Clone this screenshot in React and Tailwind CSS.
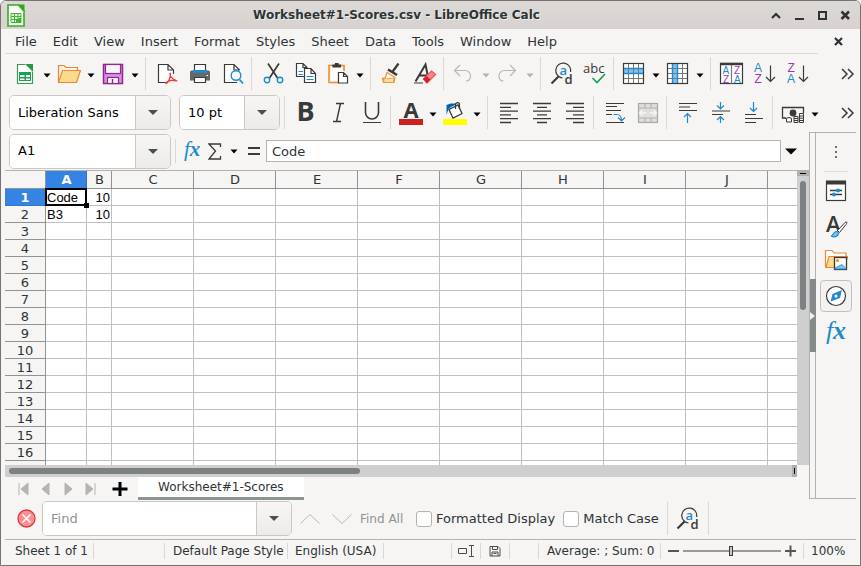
import React from "react";

const BLUE = "#1e8bcd";
const INK = "#3a3a38";

function Icon({ children, w = 24, h = 24 }) {
  return (
    <svg width={w} height={h} viewBox={`0 0 ${w} ${h}`} fill="none" stroke={INK} strokeWidth="1.2" aria-hidden="true" className="shrink-0 overflow-visible">
      {children}
    </svg>
  );
}

function Arrow({ dim }) {
  return (
    <svg width="8" height="5" viewBox="0 0 8 5" aria-hidden="true">
      <path d="M0.5 0.5h7L4 4.5z" fill={dim ? "#b4b2b0" : "#000"} />
    </svg>
  );
}

function Tool({ label, children }) {
  return (
    <button type="button" aria-label={label} className="flex h-8 w-[33px] shrink-0 items-center justify-center">
      {children}
    </button>
  );
}

function Split({ label, dim, children }) {
  return (
    <div className="flex shrink-0">
      <button type="button" aria-label={label} className="flex h-8 w-8 items-center justify-center">
        {children}
      </button>
      <button type="button" aria-label={`${label} options`} className="flex h-8 w-3 items-center justify-center pt-1">
        <Arrow dim={dim} />
      </button>
    </div>
  );
}

function Sep({ wide }) {
  return <div className={`${wide ? "ml-1" : "ml-0.5"} mr-1 h-[33px] w-px shrink-0 bg-[#dad8d6]`} />;
}

function Combo({ label, value, placeholder, className, buttonClass }) {
  return (
    <div className={`flex h-[35px] shrink-0 overflow-hidden rounded-[5px] border border-[#cdc7c2] bg-white ${className}`}>
      <input aria-label={label} defaultValue={value} placeholder={placeholder} className="min-w-0 flex-1 bg-white px-2 text-[13px] text-black outline-none placeholder:text-[#8f9192]" />
      <button type="button" aria-label={`${label} list`} className={`flex items-center justify-center border-l border-[#cdc7c2] bg-linear-to-b from-[#f7f6f5] to-[#edebe9] ${buttonClass}`}>
        <svg width="10" height="5" viewBox="0 0 10 5" aria-hidden="true"><path d="M0 0h10L5 5z" fill="#4a4f50" /></svg>
      </button>
    </div>
  );
}

function Letter({ x, y, size, color, weight = 400, children }) {
  return (
    <text x={x} y={y} fontSize={size} fontWeight={weight} fontFamily="Liberation Sans, sans-serif" fill={color} stroke="none">
      {children}
    </text>
  );
}

const FindIcon = () => (
  <Icon>
    <path d="M12.5 16A7.500 7.500 0 1 1 20.600 10" />
    <path d="M8.500 14.500L1.500 21.500" strokeWidth="2.200" />
    <text x="9.500" y="13" fontSize="13" fontFamily="Open Sans, sans-serif" fill={BLUE} stroke="none" fontWeight="600">a</text>
    <text x="14.500" y="22" fontSize="13" fontFamily="Open Sans, sans-serif" fill={INK} stroke="none" fontWeight="600">d</text>
  </Icon>
);

const Chevrons = () => (
  <Icon w={14} h={14}>
    <path d="M2 2l5 5-5 5M8 2l5 5-5 5" strokeWidth="1.5" />
  </Icon>
);

function AlignIcon({ lines }) {
  return (
    <Icon>
      {lines.map(([x1, x2], i) => (
        <path key={i} d={`M${x1} ${2.5 + i * 3.8}H${x2}`} strokeWidth="1.3" />
      ))}
    </Icon>
  );
}

function Grid({ col }) {
  return (
    <Icon>
      <rect x="1.5" y="1.5" width="20" height="20" fill="#fff" stroke="none" />
      {col ? <rect x="6.5" y="1.5" width="5" height="20" fill="#83beec" stroke="none" /> : <rect x="1.5" y="6.5" width="20" height="5" fill="#83beec" stroke="none" />}
      <path d="M6.5 2v19M11.5 2v19M16.5 2v19M2 6.5h19M2 11.5h19M2 16.5h19" stroke="#797774" strokeWidth="1" />
      {col ? <path d="M6.5 2v19M11.5 2v19" stroke={BLUE} strokeWidth="1.4" /> : <path d="M2 6.5h19M2 11.5h19" stroke={BLUE} strokeWidth="1.4" />}
      <rect x="1.5" y="1.5" width="20" height="20" />
    </Icon>
  );
}

function TitleBar() {
  const controls = [
    ["Roll up", <path key="p" d="M2 9l4-4 4 4" strokeWidth="2.2" />],
    ["Minimize", <path key="p" d="M2 10h9" strokeWidth="2" />],
    ["Maximize", <rect key="p" x="3" y="3" width="7" height="7" strokeWidth="2" />],
    ["Close", <path key="p" d="M2.5 2.5l7.500 7.500M10 2.500L2.500 10" strokeWidth="2.6" />],
  ];
  return (
    <header className="flex h-7 shrink-0 items-center bg-linear-to-b from-[#dcd9d6] to-[#d7d2cf] pr-[3px] pl-1.5">
      <svg width="18" height="23" viewBox="0 0 18 23" aria-hidden="true">
        <path d="M1 1h11l5 6v15H1z" fill="#fff" stroke="#2fb01c" strokeWidth="1.6" />
        <path d="M10 .5h7.5V9z" fill="#2fa81c" />
        <path d="M10 .5l7.5 8.500" stroke="#8fdc7e" />
        <path d="M4 9.500h10v9H4zM4 12.500h10M4 15.500h10M7.500 9.500v9M11 9.500v9" fill="#e4f7df" stroke="#43b332" />
        <path d="M9 18v-3h2v-1h3v4z" fill="#43b332" />
      </svg>
      <h1 className="flex-1 pl-[3px] text-center text-[12px] font-bold text-[#2e3436] [text-shadow:1px_1px_0_#f0eeec]">Worksheet#1-Scores.csv - LibreOffice Calc</h1>
      <div className="flex">
        {controls.map(([name, shape]) => (
          <button key={name} type="button" aria-label={name} className="flex h-6 w-[23px] items-center justify-center">
            <svg width="13" height="13" viewBox="0 0 13 13" fill="none" stroke="#2e3436">{shape}</svg>
          </button>
        ))}
      </div>
    </header>
  );
}

const MENUS = ["File", "Edit", "View", "Insert", "Format", "Styles", "Sheet", "Data", "Tools", "Window", "Help"];

function MenuBar() {
  return (
    <div className="flex h-[25px] shrink-0 px-1">
      <nav className="mr-3 flex flex-1 border-b border-[#dad8d6] pl-0.5">
        {MENUS.map((m) => (
          <button key={m} type="button" className="px-2 pt-px text-[13px] text-[#2e3436]">{m}</button>
        ))}
      </nav>
      <button type="button" aria-label="Close document" className="mr-2.5 flex w-4 items-center justify-center">
        <svg width="9" height="9" viewBox="0 0 9 9" fill="none" stroke="#2e3436" strokeWidth="2.200"><path d="M1 1l7 7M8 1L1 8" /></svg>
      </button>
    </div>
  );
}

function StandardBar() {
  return (
    <div className="flex h-[39px] shrink-0 items-center pl-2 pr-1.5">
      <Split label="New">
        <Icon>
          <path d="M4.500 2.500H13l6.500 6v13h-15z" fill="#fff" stroke="#3a9a52" />
          <path d="M12 2h8v8z" fill="#2d9447" stroke="none" />
          <path d="M12 2l8 8" stroke="#8fd6a0" strokeWidth="1" />
          <path d="M6 10h12v9H6z" fill="#18a150" stroke="none" />
          <path d="M7 13h4.500v2H7zM13 13h4v2h-4zM7 16.500h4.500v1.500H7zM13 16.500h4V18h-4z" fill="#fff" stroke="none" />
        </Icon>
      </Split>
      <Split label="Open">
        <Icon>
          <path d="M1.500 20.500v-17H7l2 2h11.500v3" stroke="#ed8733" fill="#fbf3e8" />
          <path d="M1.500 20.500l4-12h18l-4 12z" fill="#fadb8e" stroke="#ed8733" />
        </Icon>
      </Split>
      <Split label="Save">
        <Icon>
          <rect x="2.500" y="2.500" width="19" height="19" fill="#d592e2" stroke="#92278f" strokeWidth="1.500" />
          <rect x="4.500" y="2.500" width="15" height="9" fill="#f6f5f4" stroke="#92278f" />
          <rect x="6.500" y="15.500" width="11" height="6" fill="#fff" stroke="#92278f" />
          <path d="M11.500 17v4" stroke="#92278f" strokeWidth="1.500" />
        </Icon>
      </Split>
      <Sep wide />
      <Tool label="Export as PDF">
        <Icon>
          <path d="M18.500 12V8L13 2.500H3.500v18H11M13 2.500V8h5.500" fill="#fff" />
          <path d="M15.500 11.500c-1.500 0 0 5 5.500 7 2.500 1-2-.8-5.500 0-3 .7-5 2.500-4.500 3 1.500 0 5-6 4.500-10z" stroke="#ed3d3b" strokeWidth="1.300" />
        </Icon>
      </Tool>
      <Tool label="Print">
        <Icon>
          <path d="M3.500 8.500h17a1.500 1.500 0 0 1 1.500 1.500v8.500H2V10a1.500 1.500 0 0 1 1.500-1.500z" fill="#696764" stroke="none" />
          <path d="M6.500 10V2.500h11V10" fill="#fff" />
          <path d="M5 8h14v3H5z" fill="#1e8bcd" stroke="none" />
          <path d="M6.500 15.500h11v5h-11z" fill="#fff" />
          <path d="M18.500 13.500h1.500" stroke="#fff" />
        </Icon>
      </Tool>
      <Tool label="Print preview">
        <Icon>
          <path d="M18.500 8.500V8L13 2.500H3.500v18H16M13 2.500V8h5.500" fill="#fff" />
          <circle cx="15" cy="13.500" r="4.800" fill="#f6fafd" stroke={BLUE} strokeWidth="1.400" />
          <path d="M18.500 17.500l3.500 4" stroke={BLUE} strokeWidth="1.700" />
        </Icon>
      </Tool>
      <Sep />
      <Tool label="Cut">
        <Icon>
          <path d="M7 1.500L16.500 16M18 1.500L8.500 16" strokeWidth="1.700" />
          <circle cx="6" cy="18" r="2.700" stroke={BLUE} strokeWidth="1.400" />
          <circle cx="19" cy="18" r="2.700" stroke={BLUE} strokeWidth="1.400" />
        </Icon>
      </Tool>
      <Tool label="Copy">
        <Icon>
          <path d="M10 14.500H2.500v-13H9l4 4V7M9 1.500v4h4" fill="#fff" />
          <path d="M10.500 6.500H17l4.500 5v9h-11zM17 6.500v5h4.500" fill="#fff" />
          <path d="M4.500 9.500H9M4.500 12.500H9M12.500 14.500h7M12.500 17.500h7" stroke={BLUE} />
        </Icon>
      </Tool>
      <Split label="Paste">
        <Icon>
          <path d="M12 20.500H3v-17h15V9" fill="#fdf3e3" stroke="#ed8f33" strokeWidth="1.600" />
          <path d="M5 4.500h11V10h-5v9H5z" fill="#fff" stroke="none" />
          <path d="M7 5v-2h2.500V1.500h2.500v1.500H14.500v2z" fill={INK} stroke={INK} />
          <path d="M12.500 10.500h5l4 4v6.500h-9zM17.500 10.500v4h4" fill="#fff" />
        </Icon>
      </Split>
      <Sep wide />
      <Tool label="Clone formatting">
        <Icon>
          <path d="M18.500 1.500l-6.500 9" strokeWidth="2.200" />
          <path d="M8 7.500l9 5.500" strokeWidth="2.600" />
          <path d="M7 10.500l8 5-1 5H3.500l-1-4 3-1z" fill="#fff" stroke="#ed8f33" />
          <path d="M3.500 17l10.500-1-.5 4.500H4z" fill="#fbdf9c" stroke="#ed8f33" strokeWidth=".8" />
        </Icon>
      </Tool>
      <Tool label="Clear formatting">
        <Icon>
          <path d="M2.500 19.500L12.500 2.500l2 10M6 13.500h8" strokeWidth="2" />
          <path d="M1 21h9" />
          <path d="M18.500 9l4 3.500-8.500 8.500-3.500-4z" fill="#f9858d" stroke="#ed5558" />
          <path d="M13.500 14l4 3.500-3.500 3.500-4-4z" fill="#d6221f" stroke="none" />
        </Icon>
      </Tool>
      <Sep />
      <Split label="Undo" dim>
        <Icon>
          <path d="M8 3L2.500 8.500L8 14M3 8.500h10a5.500 5.500 0 0 1 5.500 5.500c0 3-1.500 5-4.500 5" stroke="#b9b7b5" />
        </Icon>
      </Split>
      <Split label="Redo" dim>
        <Icon>
          <path d="M14 3l5.500 5.500L14 14M19 8.500H8.500A5.500 5.500 0 0 0 3 14c0 3 1.500 5 4.500 5" stroke="#b9b7b5" />
        </Icon>
      </Split>
      <Sep wide />
      <Tool label="Find and replace"><FindIcon /></Tool>
      <Tool label="Spelling">
        <Icon>
          <text x="0" y="11" fontSize="13" fontFamily="Open Sans, sans-serif" fill={INK} stroke="none">abc</text>
          <path d="M9.500 16l4.500 4.500 8-8.500" stroke="#18a150" strokeWidth="1.700" />
        </Icon>
      </Tool>
      <Sep />
      <Split label="Row"><Grid /></Split>
      <Split label="Column"><Grid col /></Split>
      <Sep wide />
      <Tool label="Sort">
        <Icon>
          <rect x=".5" y="1.500" width="22" height="20" fill="#fff" />
          <path d="M0 2h23" strokeWidth="2.500" />
          <path d="M11.500 3v19" stroke="#797774" />
          <Letter x="2.500" y="12" size="10" color={BLUE}>A</Letter>
          <Letter x="3" y="21" size="10" color="#a533b1">Z</Letter>
          <Letter x="14" y="12" size="10" color="#a533b1">Z</Letter>
          <Letter x="14" y="21" size="10" color={BLUE}>A</Letter>
        </Icon>
      </Tool>
      <Tool label="Sort ascending">
        <Icon>
          <Letter x="1" y="10" size="12" color={BLUE}>A</Letter>
          <Letter x="1.500" y="21" size="12" color="#a533b1">Z</Letter>
          <path d="M17.500 3.500v16M13 15l4.500 4.500 4.500-4.500" />
        </Icon>
      </Tool>
      <Tool label="Sort descending">
        <Icon>
          <Letter x="1.500" y="10" size="12" color="#a533b1">Z</Letter>
          <Letter x="1" y="21" size="12" color={BLUE}>A</Letter>
          <path d="M17.500 3.500v16M13 15l4.500 4.500 4.500-4.500" />
        </Icon>
      </Tool>
      <button type="button" aria-label="More standard tools" className="ml-auto"><Chevrons /></button>
    </div>
  );
}

function FormatBar() {
  return (
    <div className="flex h-[39px] shrink-0 items-center pl-2 pr-1.5">
      <Combo label="Font name" value="Liberation Sans" className="mr-2 w-[162px]" buttonClass="w-[35px]" />
      <Combo label="Font size" value="10 pt" className="w-[101px]" buttonClass="w-[35px]" />
      <Sep wide />
      <Tool label="Bold"><span className="pb-1 font-['Open_Sans'] text-[27px] leading-none font-bold text-[#3a3a38]">B</span></Tool>
      <Tool label="Italic">
        <Icon><path d="M9 2.500h8M6 20.500h8M13.500 2.500l-4 18" strokeWidth="1.400" /></Icon>
      </Tool>
      <Tool label="Underline">
        <Icon><path d="M5.500 1v10.500a6.500 6.500 0 0 0 13 0V1" strokeWidth="1.600" /><path d="M3 21.500h18" strokeWidth="1.200" /></Icon>
      </Tool>
      <Sep />
      <Split label="Font color">
        <Icon>
          <text x="4.500" y="16.500" fontSize="22" fontWeight="700" fontFamily="Open Sans, sans-serif" fill={INK} stroke="none">A</text>
          <path d="M0 18h24v6H0z" fill="#c9211e" stroke="none" />
        </Icon>
      </Split>
      <Split label="Background color">
        <Icon>
          <path d="M3.500 14V4l4-1.500h7L8 6l-2.500 2z" fill="#0063b1" stroke="none" />
          <path d="M6 8.500l9-4.500 4 8.500-9 4.500z" fill="#fff" strokeWidth="1.300" />
          <path d="M12.500 8V3.500C12.500 1 16.500 1 16.500 3.500V8" />
          <path d="M0 18h24v6H0z" fill="#ff0" stroke="none" />
        </Icon>
      </Split>
      <Sep wide />
      <Tool label="Align left"><AlignIcon lines={[[3, 21], [3, 14], [3, 21], [3, 14], [3, 21], [3, 14]]} /></Tool>
      <Tool label="Center"><AlignIcon lines={[[3, 21], [7, 17], [3, 21], [7, 17], [3, 21], [7, 17]]} /></Tool>
      <Tool label="Align right"><AlignIcon lines={[[3, 21], [10, 21], [3, 21], [10, 21], [3, 21], [10, 21]]} /></Tool>
      <Sep />
      <Tool label="Wrap text">
        <Icon>
          <path d="M3 2.500h18M3 5.500h11M3 9.500h15M3 13.500h6M3 21.500h18" />
          <path d="M10.500 13.500h3c4 0 5 2 5 6.500M15 16.500l3.500 3.500 3.500-3.500" stroke={BLUE} />
        </Icon>
      </Tool>
      <Tool label="Merge cells">
        <Icon>
          <rect x="2.500" y="2.500" width="19" height="19" fill="#dededc" stroke="#a9a7a5" />
          <path d="M9 2.500V7M15 2.500V7M9 17v4.500M15 17v4.500M2.500 7h19M2.500 17h19" stroke="#b5b3b1" />
          <path d="M3.500 12h7M20.500 12h-7M6.500 9L3.500 12l3 3M17.500 9l3 3-3 3" stroke="#f6f5f4" strokeWidth="1.500" />
        </Icon>
      </Tool>
      <Sep />
      <Tool label="Align top">
        <Icon>
          <path d="M3 2.500h18M3 6h11M3 9.500h18" />
          <path d="M11.500 22V12.500M8 16l3.500-3.500L15 16" stroke={BLUE} />
        </Icon>
      </Tool>
      <Tool label="Center vertically">
        <Icon>
          <path d="M3 10h18M3 13.500h11" />
          <path d="M11.500 1v7M8 4.500L11.500 8 15 4.500M11.500 22v-6.500M8 19l3.500-3.500L15 19" stroke={BLUE} />
        </Icon>
      </Tool>
      <Tool label="Align bottom">
        <Icon>
          <path d="M3 13.500h11M3 17.500h18M3 21.500h11" />
          <path d="M11.500 1v9.500M8 7l3.500 3.500L15 7" stroke={BLUE} />
        </Icon>
      </Tool>
      <Sep />
      <Split label="Currency">
        <Icon>
          <path d="M4.500 18V17H1.500V6.500h21V12" strokeWidth="1.300" />
          <circle cx="12" cy="12" r="2.800" fill={INK} />
          <ellipse cx="8" cy="18" rx="2.500" ry="1.500" fill="#f6f5f4" strokeWidth="1" />
          <path d="M5.500 18v3h5v-3M13 15.500h4v6h-4zM13 17.500h4M13 19.500h4M18.500 12.500h4v9h-4zM18.500 15h4M18.500 17.200h4M18.500 19.500h4" fill="#f6f5f4" strokeWidth="1" />
        </Icon>
      </Split>
      <button type="button" aria-label="More formatting tools" className="ml-auto"><Chevrons /></button>
    </div>
  );
}

function FormulaBar() {
  return (
    <div className="flex h-[38px] shrink-0 items-center pl-2">
      <Combo label="Name Box" value="A1" className="w-[162px]" buttonClass="w-[35px]" />
      <div className="ml-1 h-6 w-px bg-[#dad8d6]" />
      <button type="button" aria-label="Function wizard" className="ml-2 w-5 pb-1 text-left font-['Liberation_Serif'] text-[21px] leading-none text-[#1e8bcd] italic">f<b>x</b></button>
      <button type="button" aria-label="Select function" className="ml-1 flex items-center">
        <svg width="14" height="17" viewBox="0 0 14 17" fill="none" stroke={INK} strokeWidth="1.300" className="mr-2"><path d="M12.500 4V1H1l6.500 7L1 16h11.500v-3" /></svg>
        <Arrow />
      </button>
      <button type="button" aria-label="Formula" className="ml-2 flex w-4 justify-center">
        <svg width="12" height="8" viewBox="0 0 12 8" fill={INK}><path d="M0 0h12v2H0zM0 6h12v2H0z" /></svg>
      </button>
      <input aria-label="Input line" defaultValue="Code" className="ml-1 h-[22px] min-w-0 flex-1 border border-[#b6b4b2] bg-white px-[5px] text-[13px] text-[#2e3436] outline-none" />
      <button type="button" aria-label="Expand formula bar" className="flex w-7 justify-start pl-1">
        <svg width="12" height="7" viewBox="0 0 12 7"><path d="M0 .5h12L6 6.500z" /></svg>
      </button>
    </div>
  );
}

const COLUMNS = ["A", "B", "C", "D", "E", "F", "G", "H", "I", "J"];
const ROWS = Array.from({ length: 16 }, (_, i) => i + 1);
const CELLS = { A1: "Code", B1: "10", A2: "B3", B2: "10" };

function Sheet() {
  return (
    <div className="min-w-0 flex-1 overflow-hidden bg-white">
      <table className="w-full table-fixed border-separate border-spacing-0">
        <colgroup>
          <col className="w-[41px]" />
          <col className="w-[41px]" />
          <col className="w-[25px]" />
          {COLUMNS.slice(2).map((c) => <col key={c} className="w-[82px]" />)}
          <col />
        </colgroup>
        <thead>
          <tr className="h-[18px] text-[13px] leading-4 text-[#2e3436]">
            <th className="border-r border-b border-[#8d9494] bg-[#f6f5f4] p-0" />
            {COLUMNS.map((c) => (
              <th key={c} scope="col" className={`border-r border-b py-0 pr-0 pl-px ${c === "A" ? "border-[#2a76d2] bg-[#3584e4] font-bold text-white" : "border-[#8d9494] bg-[#f6f5f4] font-normal"}`}>{c}</th>
            ))}
            <th className="border-b border-[#8d9494] bg-[#f6f5f4] p-0" />
          </tr>
        </thead>
        <tbody>
          {ROWS.map((r) => (
            <tr key={r} className="h-[17px]">
              <th scope="row" className={`border-r border-b px-0 pt-px pb-0 text-[13px] leading-[15px] ${r === 1 ? "border-[#2a76d2] bg-[#3584e4] font-bold text-white" : "border-[#8d9494] bg-[#f6f5f4] font-normal text-[#2e3436]"}`}>{r}</th>
              {COLUMNS.map((c) => (
                <td key={c} className={`relative border-r border-b border-[#c0c0c0] px-px pt-px pb-0 font-['Liberation_Sans'] text-[13px] leading-[15px] text-black ${c === "B" ? "text-right" : ""}`}>
                  {CELLS[c + r]}
                  {c === "A" && r === 1 && (
                    <div className="absolute -top-px -right-px -bottom-px -left-px z-10 border-2 border-black">
                      <div className="absolute -right-1 -bottom-1 size-[5px] bg-black" />
                    </div>
                  )}
                </td>
              ))}
              <td className="border-b border-[#c0c0c0] p-0" />
            </tr>
          ))}
          <tr className="h-[17px]">
            <th className="border-r border-[#8d9494] bg-[#f6f5f4] p-0" />
            {COLUMNS.map((c) => <td key={c} className="border-r border-[#c0c0c0] p-0" />)}
            <td className="p-0" />
          </tr>
        </tbody>
      </table>
    </div>
  );
}

function SheetTabs() {
  const shapes = [
    ["First sheet", "M1 1v12M10 1L3 7l7 6z"],
    ["Previous sheet", "M9 1L2 7l7 6z"],
    ["Next sheet", "M3 1l7 6-7 6z"],
    ["Last sheet", "M2 1l7 6-7 6zM11 1v12"],
  ];
  return (
    <div className="flex h-[23px] shrink-0 items-stretch pl-[17px]">
      {shapes.map(([name, d]) => (
        <button key={name} type="button" aria-label={name} className="mr-2.5 flex w-3 items-center justify-center">
          <svg width="12" height="14" viewBox="0 0 12 14" fill="#b4b4b2" stroke="#b4b4b2" strokeWidth="1" className="shrink-0"><path d={d} /></svg>
        </button>
      ))}
      <button type="button" aria-label="Add sheet" className="ml-1.5 flex w-4 items-center justify-center">
        <svg width="16" height="16" viewBox="0 0 16 16" className="shrink-0"><path d="M6.500 1h3v14h-3zM0.500 6.500h15v3H.5z" /></svg>
      </button>
      <button type="button" className="ml-2.5 border-b-[3px] border-[#8d9494] bg-white px-5 text-[12px] text-[#2e3436]">Worksheet#1-Scores</button>
    </div>
  );
}

function Sidebar() {
  const item = "flex size-8 items-center justify-center rounded-[4px] border";
  return (
    <aside className="mr-1 mb-px flex w-[47px] shrink-0 border-t border-b border-l border-[#b4b2b0]">
      <div className="flex w-[6px] shrink-0 flex-col justify-center border-r border-[#b4b2b0]">
        <button type="button" aria-label="Hide sidebar" className="flex h-[73px] w-[6px] items-center bg-[#868a8a]">
          <svg width="5" height="8" viewBox="0 0 5 8"><path d="M0 0l5 4-5 4z" fill="#f1f0ee" /></svg>
        </button>
      </div>
      <div className="flex flex-1 flex-col items-center gap-[3px]">
        <button type="button" aria-label="Sidebar settings" className="flex h-[39px] w-6 items-center justify-center border-b border-[#dedcda]">
          <svg width="2" height="12" viewBox="0 0 2 12" fill="#6d6d6b"><path d="M0 0h2v2H0zM0 5h2v2H0zM0 10h2v2H0z" /></svg>
        </button>
        <button type="button" aria-label="Properties" className={`${item} border-transparent`}>
          <Icon>
            <rect x="2.500" y="2.500" width="19" height="19" fill="#fff" />
            <path d="M2 3.500h20" strokeWidth="4" />
            <path d="M6 11.500h12M6 15.500h12" strokeWidth="1.400" />
            <circle cx="14" cy="11.500" r="1.500" fill={BLUE} stroke={BLUE} />
            <circle cx="10" cy="15.500" r="1.500" fill={BLUE} stroke={BLUE} />
          </Icon>
        </button>
        <button type="button" aria-label="Styles" className={`${item} border-transparent`}>
          <Icon>
            <text x="2" y="17.500" fontSize="22" fontWeight="600" fontFamily="Open Sans, sans-serif" fill={INK} stroke="none">A</text>
            <path d="M13.500 16.500l7.500-8c2-1.500 2.500 0 1 2l-6.500 8z" fill="#fff" strokeWidth="1" />
            <path d="M7 22c2 0 2-4 5-4.500 2 0 3 1.500 2 3.500-2 2-5 2-7 1z" fill="#83beec" stroke={BLUE} />
          </Icon>
        </button>
        <button type="button" aria-label="Gallery" className={`${item} border-transparent`}>
          <Icon>
            <path d="M1.500 18.500v-17H8l2 2.500h12v3" stroke="#ed8733" fill="#fff" />
            <path d="M2 18.500l3-11h18.500l-3 11z" fill="#fadb8e" stroke="#ed8733" />
            <rect x="10.500" y="8.500" width="12" height="12" fill="#fff" strokeWidth="1.300" />
            <circle cx="13.500" cy="11.500" r="1.500" fill="#ed8733" stroke="none" />
            <path d="M11 20v-1l3-1.500 4-2 4 4V20z" fill="#83beec" stroke={BLUE} strokeWidth=".8" />
          </Icon>
        </button>
        <button type="button" aria-label="Navigator" className={`${item} border-[#c4c0bc] bg-[#f3f2f0]`}>
          <Icon>
            <circle cx="12" cy="12" r="9.500" fill="#fff" />
            <path d="M7.500 16.500l1.500-6 8-3.500-1.500 6.500z" fill={BLUE} stroke={BLUE} />
            <circle cx="12" cy="12" r="1.500" fill="#fff" stroke="none" />
          </Icon>
        </button>
        <button type="button" aria-label="Functions" className={`${item} border-transparent font-['Liberation_Serif'] text-[26px] leading-none text-[#1e8bcd] italic`}>f<b>x</b></button>
      </div>
    </aside>
  );
}

function Check({ id, label, className }) {
  return (
    <div className={`flex items-center gap-1 ${className}`}>
      <input id={id} type="checkbox" className="size-4 appearance-none rounded-[3px] border border-[#b8b2ac] bg-white" />
      <label htmlFor={id} className="text-[13px] whitespace-nowrap text-[#2e3436]">{label}</label>
    </div>
  );
}

function FindBar() {
  return (
    <div className="flex h-[39px] shrink-0 items-center pb-0.5 pl-4">
      <button type="button" aria-label="Close find bar" className="mr-1.5">
        <svg width="19" height="19" viewBox="0 0 19 19" fill="none"><circle cx="9.500" cy="9.500" r="8.500" fill="#ff8e93" stroke="#d8393c" strokeWidth="1.300" /><path d="M5.500 5.500l8 8M13.500 5.500l-8 8" stroke="#fff" strokeWidth="1.600" /></svg>
      </button>
      <Combo label="Find text" placeholder="Find" className="w-[250px]" buttonClass="w-[35px]" />
      <button type="button" aria-label="Find previous" className="ml-2"><svg width="20" height="10" viewBox="0 0 20 10" fill="none" stroke="#b9b7b5"><path d="M.5 9.500L10 .5l9.500 9" /></svg></button>
      <button type="button" aria-label="Find next" className="ml-3"><svg width="20" height="10" viewBox="0 0 20 10" fill="none" stroke="#b9b7b5"><path d="M.5 .5L10 9.500l9.500-9" /></svg></button>
      <button type="button" className="ml-2 w-12 text-left text-[12px] whitespace-nowrap text-[#8f9192]">Find All</button>
      <Check id="formatted" label="Formatted Display" className="ml-2" />
      <Check id="match-case" label="Match Case" className="ml-2" />
      <div className="ml-2 h-[33px] w-px bg-[#dad8d6]" />
      <button type="button" aria-label="Find and replace dialog" className="mx-2"><FindIcon /></button>
      <div className="h-[33px] w-px bg-[#dad8d6]" />
    </div>
  );
}

function StatusBar() {
  const cell = "flex h-4 shrink-0 items-center border-r border-[#dad8d6] whitespace-nowrap";
  return (
    <footer className="mx-1 flex h-[26px] shrink-0 items-center border-t border-[#b4b2b0] pb-1 text-[12px] text-[#2e3436]">
      <div className={`${cell} w-[89px] pl-2.5`}>Sheet 1 of 1</div>
      <div className="h-4 flex-1 border-r border-[#dad8d6]" />
      <div className={`${cell} w-[123px] pl-2`}>Default Page Style</div>
      <div className={`${cell} w-24 pl-[7px]`}>English (USA)</div>
      <div className={`${cell} w-[68px]`} />
      <div className={`${cell} w-[29px] justify-center`}>
        <svg width="17" height="12" viewBox="0 0 17 12" fill="none" stroke="#4a4a48"><path d="M.5 3.500h8v5h-8zM11 .5h5M13.500 .5v11M11 11.500h5" /></svg>
      </div>
      <div className={`${cell} w-[29px] justify-center`}>
        <svg width="12" height="12" viewBox="0 0 12 12" fill="none" stroke="#4a4a48"><path d="M1 1.500h8l2 2v7.500H1zM3.500 1.500v3h5v-3M3 11V7h6v4M4.500 8.500h3" /></svg>
      </div>
      <div className={`${cell} w-[29px]`} />
      <div className={`${cell} w-[122px] pl-2`}>Average: ; Sum: 0</div>
      <div className={`${cell} w-[143px] justify-center gap-1`}>
        <button type="button" aria-label="Zoom out"><svg width="11" height="12" viewBox="0 0 11 12"><path d="M0 5h11v2H0z" fill="#555" /></svg></button>
        <input type="range" aria-label="Zoom" min="0" max="100" defaultValue="49" className="h-3 w-[98px] appearance-none bg-transparent [&::-webkit-slider-runnable-track]:h-0.5 [&::-webkit-slider-runnable-track]:bg-[#9a9a98] [&::-webkit-slider-thumb]:-mt-1 [&::-webkit-slider-thumb]:h-2.5 [&::-webkit-slider-thumb]:w-1 [&::-webkit-slider-thumb]:appearance-none [&::-webkit-slider-thumb]:border [&::-webkit-slider-thumb]:border-[#3a3a38] [&::-webkit-slider-thumb]:bg-[#c8c8c6]" />
        <button type="button" aria-label="Zoom in"><svg width="11" height="12" viewBox="0 0 11 12"><path d="M0 5h11v2H0zM4.500 .5h2v11h-2z" fill="#555" /></svg></button>
      </div>
      <div className="w-[52px] shrink-0 pl-[7px]">100%</div>
    </footer>
  );
}

export default function App() {
  return (
    <div className="flex h-screen flex-col overflow-hidden rounded-t-[6px] border border-[#77736f] bg-[#f6f5f4] font-['DejaVu_Sans',sans-serif]">
      <TitleBar />
      <MenuBar />
      <StandardBar />
      <FormatBar />
      <main className="flex min-h-0 flex-1">
        <section className="flex min-w-0 flex-1 flex-col">
          <FormulaBar />
          <div className="ml-1 flex min-h-0 flex-1 border-t border-[#b4b2b0]">
            <Sheet />
            <div className="flex w-3 shrink-0 flex-col items-center bg-[#cfcfcf]">
              <div className="flex h-[5px] w-full items-center justify-center bg-[#b0b0ae]"><div className="h-px w-1.5 bg-black" /></div>
              <div className="mt-[5px] h-[129px] w-1.5 rounded-[3px] bg-[#7d8181]" />
            </div>
          </div>
          <div className="mr-3 ml-1 flex h-3 shrink-0 items-center bg-[#cfcfcf] pl-1">
            <div className="h-1.5 w-[351px] rounded-[3px] bg-[#7d8181]" />
            <div className="ml-auto flex h-full w-[5px] items-center justify-center bg-[#b0b0ae]"><div className="h-1.5 w-px bg-black" /></div>
          </div>
          <SheetTabs />
        </section>
        <Sidebar />
      </main>
      <FindBar />
      <StatusBar />
    </div>
  );
}
